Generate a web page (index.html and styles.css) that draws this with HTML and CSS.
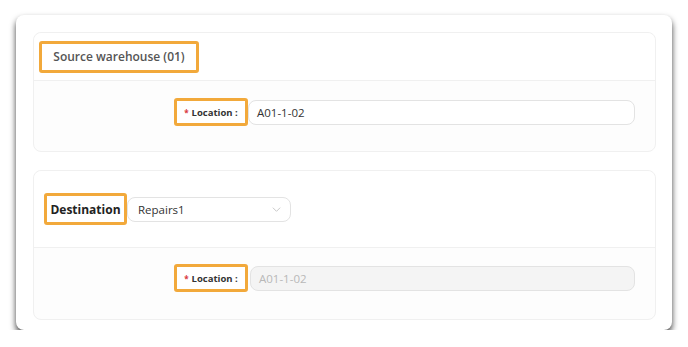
FILE: index.html
```html
<!DOCTYPE html>
<html>
  <head>
    <title>Transfer</title>
    <link rel="stylesheet" href="styles.css">
  </head>
  <body>
    <div class="panel">
      <div class="section">
        <div class="section-head source-head">
          <div class="mark head-title">Source warehouse (01)</div>
        </div>
        <div class="section-body">
          <div class="field-row">
            <div class="field-label">
              <div class="mark loc-label"><span class="req">*</span> Location :</div>
            </div>
            <div class="input">A01-1-02</div>
          </div>
        </div>
      </div>

      <div class="section second">
        <div class="section-head dest-head">
          <div class="mark head-title dest-title">Destination</div>
          <div class="select">
            <span>Repairs1</span>
            <svg class="chevron" viewBox="0 0 12 12" xmlns="http://www.w3.org/2000/svg">
              <path d="M2 4l4 4 4-4" />
            </svg>
          </div>
        </div>
        <div class="section-body">
          <div class="field-row">
            <div class="field-label">
              <div class="mark loc-label"><span class="req">*</span> Location :</div>
            </div>
            <div class="input disabled">A01-1-02</div>
          </div>
        </div>
      </div>
    </div>
  </body>
</html>
```

FILE: styles.css
```css
body {
  margin: 0;
  background-color: #ffffff;
  font-family: "Open Sans", "Noto Sans", Arial, sans-serif;
  color: #333333;
}
.panel {
  width: 656px;
  height: 315px;
  box-sizing: border-box;
  margin: 15px 0 0 16px;
  padding: 17px 16px 10px 17px;
  background-color: #ffffff;
  border-radius: 8px;
  box-shadow: 0 4px 6px rgba(0, 0, 0, 0.75);
}
.section {
  border: 1px solid #f0f0f0;
  border-radius: 8px;
  background-color: #fdfdfd;
}
.second {
  margin-top: 18px;
}
.section-head {
  display: flex;
  align-items: center;
  border-bottom: 1px solid #f0f0f0;
  background-color: #ffffff;
  border-radius: 8px 8px 0 0;
}
.source-head {
  height: 47px;
  padding-left: 5px;
}
.dest-head {
  height: 76px;
  padding-left: 10px;
}
.mark {
  border: 3px solid #f2a93b;
  border-radius: 3px;
  box-sizing: border-box;
  display: flex;
  align-items: center;
  background-color: #ffffff;
}
.head-title {
  width: 160px;
  height: 32px;
  justify-content: center;
  font-size: 12px;
  font-weight: 600;
  color: #555555;
}
.dest-title {
  width: 83px;
  font-size: 12px;
  font-weight: 700;
  color: #222222;
}
.select {
  width: 164px;
  height: 25px;
  box-sizing: border-box;
  border: 1px solid #e3e3e3;
  border-radius: 8px;
  display: flex;
  align-items: center;
  justify-content: space-between;
  padding: 0 8px 0 10px;
  font-size: 11.5px;
  color: #333333;
  background-color: #ffffff;
}
.chevron {
  width: 11px;
  height: 11px;
  fill: none;
  stroke: #c4c4c4;
  stroke-width: 1;
}
.section-body {
  height: 70px;
  box-sizing: border-box;
  padding: 17px 20px 0 0;
}
.second .section-body {
  height: 71px;
  padding-top: 16px;
}
.field-row {
  display: flex;
  align-items: center;
}
.field-label {
  width: 214px;
  display: flex;
  justify-content: flex-end;
}
.loc-label {
  width: 74px;
  height: 28px;
  justify-content: center;
  font-size: 9.5px;
  font-weight: 700;
  color: #333333;
}
.req {
  color: #d9363e;
  font-size: 8px;
  margin-right: 3px;
}
.input {
  flex: 1;
  height: 25px;
  box-sizing: border-box;
  border: 1px solid #e3e3e3;
  border-radius: 8px;
  display: flex;
  align-items: center;
  padding-left: 8px;
  font-size: 11.5px;
  color: #333333;
  background-color: #ffffff;
}
.disabled {
  margin-left: 2px;
  background-color: #f4f4f4;
  color: #b8b8b8;
}
```
